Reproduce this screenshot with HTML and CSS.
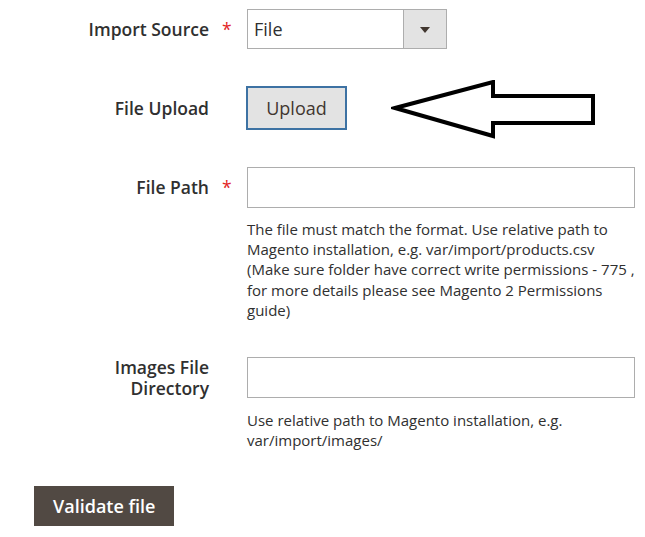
FILE: index.html
```html
<!DOCTYPE html>
<html>
<head>
    <title>Import</title>
    <link rel="stylesheet" href="styles.css">
</head>
<body>
    <form class="import-form">
        <div class="field">
            <label class="field-label">Import Source<span class="required">*</span></label>
            <div class="select">
                <span class="select-value">File</span>
                <span class="select-toggle"><span class="caret"></span></span>
            </div>
        </div>

        <div class="field">
            <label class="field-label">File Upload<span class="required"></span></label>
            <div class="upload-row">
                <button type="button" class="upload-button">Upload</button>
                <svg class="pointer" width="210" height="60" viewBox="0 0 210 60">
                    <path d="M4 28 L102 2 L102 16 L202 16 L202 43 L102 43 L102 56 Z" fill="#fff" stroke="#000" stroke-width="4" stroke-linejoin="miter"/>
                </svg>
            </div>
        </div>

        <div class="field">
            <label class="field-label">File Path<span class="required">*</span></label>
            <input class="text-input" type="text">
            <p class="note">The file must match the format. Use relative path to Magento installation, e.g. var/import/products.csv (Make sure folder have correct write permissions - 775 , for more details please see Magento 2 Permissions guide)</p>
        </div>

        <div class="field">
            <label class="field-label">Images File<br>Directory<span class="required"></span></label>
            <input class="text-input" type="text">
            <p class="note">Use relative path to Magento installation, e.g. var/import/images/</p>
        </div>

        <button type="button" class="validate-button">Validate file</button>
    </form>
</body>
</html>
```

FILE: styles.css
```css
body {
    margin: 0;
    background: #fff;
    font-family: "Open Sans", "Liberation Sans", sans-serif;
    color: #303030;
}

.import-form {
    padding-top: 9px;
}

.field {
    display: grid;
    grid-template-columns: 247px 388px;
    margin-bottom: 37px;
}

.field-label {
    grid-column: 1;
    grid-row: 1;
    align-self: center;
    display: flex;
    align-items: center;
    justify-content: flex-end;
    text-align: right;
    font-size: 17.5px;
    font-weight: 600;
    line-height: 21px;
}

.required {
    width: 38px;
    flex-shrink: 0;
    box-sizing: border-box;
    padding-left: 13px;
    color: #e22626;
    font-weight: 400;
    text-align: left;
}

.select {
    grid-column: 2;
    display: flex;
    width: 200px;
    height: 40px;
    box-sizing: border-box;
    border: 1px solid #adadad;
}

.select-value {
    flex: 1;
    padding-left: 6px;
    font-size: 18px;
    line-height: 38px;
}

.select-toggle {
    width: 42px;
    background: #e3e3e3;
    border-left: 1px solid #adadad;
    display: flex;
    align-items: center;
    justify-content: center;
}

.caret {
    width: 0;
    height: 0;
    border-left: 5px solid transparent;
    border-right: 5px solid transparent;
    border-top: 6px solid #41362f;
    margin-top: 2px;
}

.upload-row {
    grid-column: 2;
    display: flex;
    align-items: center;
    margin-left: -1px;
}

.upload-button {
    width: 101px;
    height: 44px;
    background: #e3e3e3;
    border: 2px solid #3d72a3;
    font-family: "Open Sans", "Liberation Sans", sans-serif;
    font-size: 18px;
    color: #41362f;
    padding: 0;
}

.pointer {
    margin: -8px 0 -8px 44px;
    position: relative;
    top: 2px;
}

.text-input {
    grid-column: 2;
    grid-row: 1;
    height: 41px;
    box-sizing: border-box;
    border: 1px solid #adadad;
    margin: 0;
}

.note {
    grid-column: 2;
    margin: 11px 0 0;
    font-size: 15px;
    line-height: 20.2px;
}

.validate-button {
    margin-left: 34px;
    margin-top: -1px;
    height: 40px;
    padding: 0 19px;
    background: #514943;
    color: #fff;
    border: none;
    font-family: "Open Sans", "Liberation Sans", sans-serif;
    font-size: 18px;
    font-weight: 600;
}
```
